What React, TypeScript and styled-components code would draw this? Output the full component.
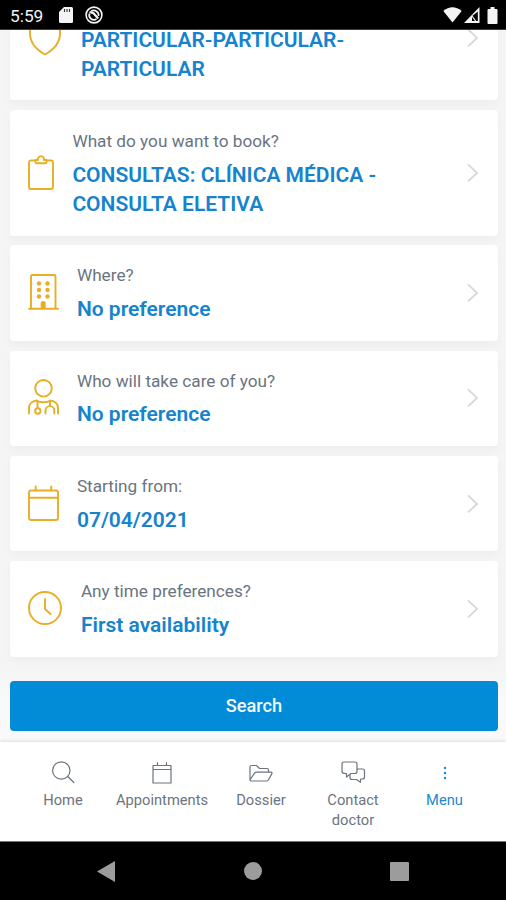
import React from "react";
import styled, { createGlobalStyle } from "styled-components";

const Global = createGlobalStyle`
  * { box-sizing: border-box; }
  body { margin: 0; background: #000; font-family: Roboto, "Liberation Sans", sans-serif; }
`;

const Screen = styled.div`
  width: 506px;
  height: 900px;
  display: flex;
  flex-direction: column;
  overflow: hidden;
  background: #f6f6f6;
`;

const StatusBar = styled.header`
  flex: none;
  height: 30px;
  background: #000;
  color: #f4f4f4;
  display: flex;
  align-items: center;
  justify-content: space-between;
  padding: 1px 7px 0 10px;
  border-bottom: 1px solid #3c3c3c;
  svg { display: block; }
`;

const StatusGroup = styled.div<{ $gap: number }>`
  display: flex;
  align-items: center;
  gap: ${(p) => p.$gap}px;
`;

const Time = styled.span`
  width: 37px;
  padding-top: 1px;
  font-size: 17.3px;
  line-height: 26px;
  font-weight: 400;
  white-space: nowrap;
`;

const Scroller = styled.main`
  flex: none;
  height: 712px;
  overflow: hidden;
  background: linear-gradient(#f5f5f5 0, #f5f5f5 640px, #f9f9f9 670px);
`;

const List = styled.div`
  margin-top: -54.9px;
  padding: 0 8.5px 0 10.4px;
  display: flex;
  flex-direction: column;
  gap: 9.8px;
`;

const Card = styled.section<{ $tall?: boolean }>`
  height: ${(p) => (p.$tall ? 125.3 : 95.5)}px;
  background: #fff;
  border-radius: 4px;
  box-shadow: 0 4px 10px rgba(0, 0, 0, 0.035);
  padding: 0 18.5px 0 17.5px;
  display: flex;
  align-items: center;
`;

const IconBox = styled.div<{ $w: number }>`
  flex: none;
  width: ${(p) => p.$w}px;
  padding-bottom: 2px;
  svg { display: block; overflow: visible; }
`;

const CardText = styled.div<{ $tall?: boolean }>`
  flex: 1;
  align-self: flex-start;
  padding-top: ${(p) => (p.$tall ? 17 : 16)}px;
`;

const Label = styled.div`
  height: 29px;
  font-size: 17.2px;
  line-height: 29px;
  color: #6a7480;
  margin-bottom: 4.7px;
  white-space: nowrap;
`;

const Value = styled.div`
  font-size: 21px;
  line-height: 29px;
  font-weight: 600;
  color: #1583cd;
  white-space: nowrap;
`;

const SearchButton = styled.button`
  display: block;
  width: 488px;
  height: 49.5px;
  margin: 24.4px 0 0 10px;
  padding: 0;
  border: 0;
  border-radius: 4px;
  background: #028bd7;
  color: #f1f8fd;
  font: 500 18.2px/49px Roboto, sans-serif;
`;

const TabBar = styled.nav`
  flex: none;
  height: 99px;
  background: #fff;
  box-shadow: 0 -1px 3px rgba(0, 0, 0, 0.12);
  position: relative;
  display: grid;
  grid-template-columns: 99px 99px 99px 85px 98px;
  padding: 17px 13px 0 13.5px;
`;

const Tab = styled.a<{ $active?: boolean }>`
  display: flex;
  flex-direction: column;
  align-items: center;
  text-align: center;
  color: ${(p) => (p.$active ? "#1b87cf" : "#6b747e")};
  font-size: 14.7px;
  line-height: 19.5px;
  white-space: nowrap;
  svg { display: block; width: 26px; height: 26px; margin-bottom: 6px; overflow: visible; }
`;

const SystemNav = styled.footer`
  flex: none;
  height: 59px;
  background: #000;
  border-top: 1px solid #777;
  display: flex;
  justify-content: space-between;
  align-items: center;
  padding: 0 97px;
  svg { display: block; }
`;

const gold = "#e8ae24";
const line = {
  fill: "none",
  stroke: gold,
  strokeWidth: 1.9,
  strokeLinecap: "round" as const,
  strokeLinejoin: "round" as const,
};

const Shield = () => (
  <svg width="34" height="36" viewBox="0 0 34 36" {...line}>
    <path d="M17 1.500C13 5 7 6.500 2 6.500v8C2 24 9 31 17 35.500 25 31 32 24 32 14.500v-8C27 6.500 21 5 17 1.500Z" />
  </svg>
);

const Clipboard = () => (
  <svg width="26" height="36" viewBox="0 0 26 36" {...line}>
    <path d="M7.500 6.500H3A2 2 0 0 0 1 8.500v24.500a2 2 0 0 0 2 2h20a2 2 0 0 0 2-2V8.500a2 2 0 0 0-2-2h-4.500" />
    <path d="M7.500 6v2q0 1.300 1.300 1.300h8.400q1.300 0 1.300-1.300V6h-2.500a3.100 3.100 0 1 0-6 0Z" />
  </svg>
);

const Building = () => (
  <svg width="31" height="36" viewBox="0 0 31 36" {...line}>
    <path d="M3 34.500V2.300q0-1.300 1.300-1.300h21.900q1.300 0 1.300 1.300V34.500M1 34.700h29" />
    <g fill={gold} stroke="none">
      {[9.5, 16, 22.5].map((y) => (
        <React.Fragment key={y}>
          <circle cx="11" cy={y} r="2.200" />
          <circle cx="19.500" cy={y} r="2.200" />
        </React.Fragment>
      ))}
      <path d="M12.700 34.500v-5a2.500 2.500 0 0 1 5 0v5Z" />
    </g>
  </svg>
);

const Doctor = () => (
  <svg width="31" height="36" viewBox="0 0 31 36" {...line}>
    <circle cx="15.500" cy="9.300" r="8.300" />
    <path d="M1 34.500v-5.500c0-4 3-7 7.500-7.500 2 1.500 4.500 1.800 7 1.800s5-.3 7-1.800c4.500.5 7.500 3.500 7.500 7.500v5.500" />
    <path d="M9.500 22v7M22 22v5M17.500 34.500v-3a4.400 4.400 0 0 1 8.800 0v3" />
    <circle cx="9.800" cy="32" r="2.700" />
  </svg>
);

const Calendar = () => (
  <svg width="31" height="36" viewBox="0 0 31 36" {...line}>
    <rect x="1" y="5.500" width="29" height="29.500" rx="2" />
    <path d="M1 12.700h29M7.700 1.500v4M23.200 1.500v4" />
  </svg>
);

const Clock = () => (
  <svg width="34" height="34" viewBox="0 0 34 34" {...line}>
    <circle cx="17" cy="17" r="16" />
    <path d="M17 8v10l5.500 5" />
  </svg>
);

const Chevron = () => (
  <svg width="13" height="22" viewBox="0 0 13 22" fill="none" stroke="#d5d7d9" strokeWidth="1.800">
    <path d="m2 2.400 9 8.500-9 8.500" />
  </svg>
);

type Entry = { icon: React.ReactNode; w: number; label: string; value: string[] };

const entries: Entry[] = [
  { icon: <Shield />, w: 53, label: "", value: ["PARTICULAR-PARTICULAR-", "PARTICULAR"] },
  { icon: <Clipboard />, w: 44.5, label: "What do you want to book?", value: ["CONSULTAS: CLÍNICA MÉDICA -", "CONSULTA ELETIVA"] },
  { icon: <Building />, w: 49, label: "Where?", value: ["No preference"] },
  { icon: <Doctor />, w: 49, label: "Who will take care of you?", value: ["No preference"] },
  { icon: <Calendar />, w: 49, label: "Starting from:", value: ["07/04/2021"] },
  { icon: <Clock />, w: 53, label: "Any time preferences?", value: ["First availability"] },
];

const tabLine = {
  viewBox: "0 0 26 26",
  fill: "none",
  stroke: "currentColor",
  strokeWidth: 1.2,
  strokeLinecap: "round" as const,
  strokeLinejoin: "round" as const,
};

export default function App() {
  return (
    <Screen>
      <Global />
      <StatusBar>
        <StatusGroup $gap={12}>
          <Time>5:59</Time>
          <svg width="14" height="16" viewBox="0 0 14 16">
            <path d="M5 0h7.500Q14 0 14 1.500v13q0 1.500-1.500 1.500h-11Q0 16 0 14.500V5Z" fill="#f4f4f4" />
            <path d="M5.500 2v3M8 2v3M10.500 2v3" stroke="#333" strokeWidth="1.100" />
          </svg>
          <svg width="18" height="18" viewBox="0 0 18 18" fill="none" stroke="#f4f4f4">
            <circle cx="9" cy="9" r="7.900" strokeWidth="1.600" />
            <path d="M6.200 5.300A4.700 4.700 0 0 1 13.500 10M11.500 13A4.700 4.700 0 0 1 4.500 7.500" strokeWidth="1.700" />
            <path d="m4.500 6 4 1.200 4.700 5.300" strokeWidth="2.200" />
          </svg>
        </StatusGroup>
        <StatusGroup $gap={2}>
          <svg width="19" height="16" viewBox="0 0 19 16">
            <path d="M.3 4Q9.500-3.500 18.700 4L9.500 15.500Z" fill="#f4f4f4" />
          </svg>
          <svg width="16" height="16" viewBox="0 0 16 16">
            <path d="M15.500 0v16H0Z" fill="#f4f4f4" />
            <path d="M13.800 4.500v9.500h-1.500L8.500 8.800Z" fill="#000" />
            <path d="M8 10v4h3Z" fill="#000" />
          </svg>
          <svg width="17" height="17" viewBox="0 0 17 17">
            <path d="M8.500 0h4v2h2q1 0 1 1v13q0 1-1 1H6.500q-1 0-1-1V3q0-1 1-1h2Z" fill="#f4f4f4" />
          </svg>
        </StatusGroup>
      </StatusBar>

      <Scroller>
        <List>
          {entries.map((e) => {
            const tall = e.value.length > 1;
            return (
              <Card key={e.value[0] + e.label} $tall={tall}>
                <IconBox $w={e.w}>{e.icon}</IconBox>
                <CardText $tall={tall}>
                  <Label>{e.label}</Label>
                  {e.value.map((v) => (
                    <Value key={v}>{v}</Value>
                  ))}
                </CardText>
                <Chevron />
              </Card>
            );
          })}
        </List>
        <SearchButton>Search</SearchButton>
      </Scroller>

      <TabBar>
        <Tab>
          <svg {...tabLine}>
            <circle cx="11.300" cy="11.500" r="8.700" />
            <path d="m17.800 17.500 6 6" />
          </svg>
          Home
        </Tab>
        <Tab>
          <svg {...tabLine}>
            <path d="M4 6.500h18v17.500H4ZM4 10.500h18M8.500 3.500v3M17.500 3.500v3" />
          </svg>
          Appointments
        </Tab>
        <Tab>
          <svg {...tabLine}>
            <path d="M2 20.500V8Q2 6.500 3.500 6.500h5l3 3H19q1.500 0 1.500 1.500V13M3 22h15.500q1.300 0 2-1.200l3.300-5.900q.7-1.700-1-1.700H8.300q-1.300 0-2 1.200L2.300 20.500q-.5 1.300.7 1.500Z" />
          </svg>
          Dossier
        </Tab>
        <Tab>
          <svg {...tabLine}>
            <path d="M3.500 3H15q2 0 2 2V12.500q0 2-2 2h-4L6.500 18V14.500h-1q-3.500 0-3.500-2V5q0-2 1.500-2Z" />
            <path d="M17 10h5.500q2 0 2 2V18q0 2-2 2H20.500v3.200L16.500 20.500H12q-2 0-2-2v-3" />
          </svg>
          Contact
          <br />
          doctor
        </Tab>
        <Tab $active>
          <svg viewBox="0 0 26 26" fill="currentColor">
            <circle cx="13" cy="9" r="1.200" />
            <circle cx="13" cy="14" r="1.200" />
            <circle cx="13" cy="19" r="1.200" />
          </svg>
          Menu
        </Tab>
      </TabBar>

      <SystemNav>
        <svg width="18" height="21" viewBox="0 0 18 21">
          <path d="M18 0v21L0 10.500Z" fill="#9c9c9c" />
        </svg>
        <svg width="18" height="18" viewBox="0 0 18 18">
          <circle cx="9" cy="9" r="9" fill="#9c9c9c" />
        </svg>
        <svg width="19" height="19" viewBox="0 0 19 19">
          <rect width="19" height="19" rx="1" fill="#9c9c9c" />
        </svg>
      </SystemNav>
    </Screen>
  );
}
